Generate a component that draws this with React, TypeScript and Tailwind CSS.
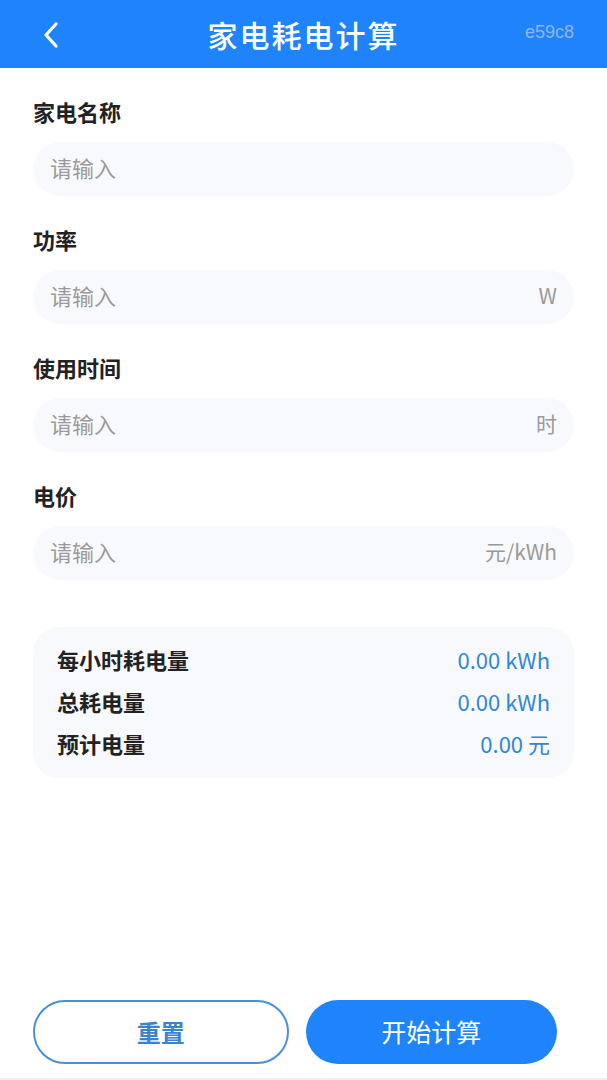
import React, { useState } from 'react';

const fields = [
  { key: 'name', label: '家电名称', unit: '' },
  { key: 'power', label: '功率', unit: 'W' },
  { key: 'hours', label: '使用时间', unit: '时' },
  { key: 'price', label: '电价', unit: '元/kWh' },
];

const results = [
  { label: '每小时耗电量', value: '0.00 kWh' },
  { label: '总耗电量', value: '0.00 kWh' },
  { label: '预计电量', value: '0.00 元' },
];

const App: React.FC = () => {
  const [values, setValues] = useState<Record<string, string>>({});

  return (
    <div
      className="flex h-[1080px] w-full flex-col bg-white"
      style={{ fontFamily: '"Noto Sans CJK SC", "Noto Sans", sans-serif' }}
    >
      {/* Header */}
      <div className="relative flex h-[68px] shrink-0 items-center justify-center bg-[#1f84fb]">
        <button className="absolute left-[38px] top-[20px] flex h-[30px] w-[26px] items-center justify-center">
          <svg width="20" height="28" viewBox="0 0 20 28" fill="none">
            <path d="M15 3 L5 14 L15 25" stroke="white" strokeWidth="3.2" strokeLinecap="round" strokeLinejoin="round" />
          </svg>
        </button>
        <h1 className="text-[30px] font-medium tracking-[2px] text-white">家电耗电计算</h1>
        <span
          className="absolute right-[33px] top-[19px] text-[18px] text-[#8fb6ee]"
          style={{ fontFamily: '"Liberation Sans", Arial, sans-serif' }}
        >
          e59c8
        </span>
      </div>

      {/* Form */}
      <div className="flex flex-col gap-[29px] px-[33px] pt-[29px]">
        {fields.map((f) => (
          <div key={f.key} className="flex flex-col gap-[17px]">
            <label className="text-[22px] font-semibold leading-[28px] text-[#222]">{f.label}</label>
            <div className="flex h-[54px] items-center rounded-full bg-[#f8f9fd] px-[17px] pb-[3px]">
              <input
                className="min-w-0 flex-1 bg-transparent text-[22px] text-[#333] outline-none placeholder:text-[#9a9a9a]"
                placeholder="请输入"
                value={values[f.key] ?? ''}
                onChange={(e) => setValues({ ...values, [f.key]: e.target.value })}
              />
              {f.unit && <span className="text-[21px] text-[#9a9a9a]">{f.unit}</span>}
            </div>
          </div>
        ))}
      </div>

      {/* Results */}
      <div className="mx-[33px] mt-[47px] flex flex-col gap-[14px] rounded-[26px] bg-[#f7f9fd] px-[24px] pb-[21px] pt-[18px]">
        {results.map((r) => (
          <div key={r.label} className="flex items-center justify-between leading-[28px]">
            <span className="text-[22px] font-semibold text-[#222]">{r.label}</span>
            <span className="text-[22px] text-[#2f87d8]">{r.value}</span>
          </div>
        ))}
      </div>

      {/* Buttons */}
      <div className="mt-auto flex gap-[17px] border-b-2 border-[#f0f0f0] px-[33px] pb-[14px] pr-[50px]">
        <button className="flex h-[64px] flex-1 items-center justify-center rounded-full border-2 border-[#4a8fd6] text-[24px] font-bold text-[#3a83cf]">
          重置
        </button>
        <button className="flex h-[64px] flex-1 items-center justify-center rounded-full bg-[#1f84fb] text-[25px] text-white">
          开始计算
        </button>
      </div>
    </div>
  );
};

export default App;
